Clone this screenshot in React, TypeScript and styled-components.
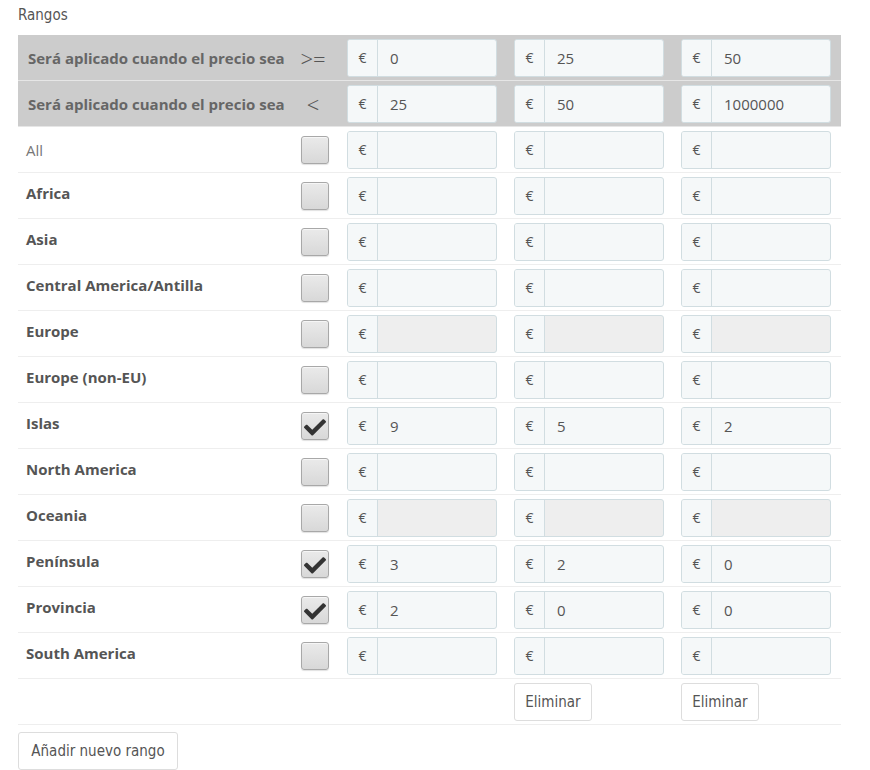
import React from "react";
import styled, { createGlobalStyle } from "styled-components";

const Global = createGlobalStyle`
  body {
    margin: 0;
    background: #fff;
    font-family: "Open Sans", "Liberation Sans", sans-serif;
    color: #555;
  }
`;

const Page = styled.div`
  padding: 4px 30px 0 18px;
  width: 822px;
`;

const Title = styled.div`
  font-family: "DejaVu Sans Condensed", "Open Sans", sans-serif;
  font-size: 15px;
  color: #555;
  height: 31px;
  line-height: 22px;
`;

const Grid = styled.div`
  display: grid;
  grid-template-columns: 272px 50px 167px 167px 167px;
  width: 823px;
`;

const Cell = styled.div<{ $head?: boolean }>`
  height: 45px;
  display: flex;
  align-items: center;
  background: ${(p) => (p.$head ? "#cccccc" : "#fff")};
  border-bottom: 1px solid ${(p) => (p.$head ? "#e6e6e6" : "#eeeeee")};
`;

const LabelCell = styled(Cell)<{ $bold?: boolean }>`
  padding-left: 8px;
  align-items: ${(p) => (p.$bold ? "flex-start" : "center")};
  padding-top: ${(p) => (p.$bold ? "10px" : "0")};
  height: ${(p) => (p.$bold ? "35px" : "45px")};
  font-size: 15px;
  font-weight: ${(p) => (p.$bold ? 700 : 400)};
  color: ${(p) => (p.$bold ? "#555" : "#777")};
  box-sizing: content-box;
`;

const HeadLabel = styled(Cell)`
  padding-left: 10px;
  font-size: 15px;
  font-weight: 700;
  color: #666;
  white-space: nowrap;
`;

const OpCell = styled(Cell)`
  justify-content: center;
  font-size: 22px;
  font-weight: 300;
  color: #555;
  padding-right: 4px;
`;

const CheckCell = styled(Cell)`
  justify-content: center;
`;

const InputCell = styled(Cell)`
  padding-left: 7px;
`;

const Box = styled.div`
  width: 26px;
  height: 26px;
  border: 1px solid #a8a8a8;
  border-radius: 3px;
  background: linear-gradient(#eaeaea, #d8d8d8);
  box-shadow: inset 0 1px 0 #f6f6f6, 0 1px 1px rgba(0, 0, 0, 0.12);
  display: flex;
  align-items: center;
  justify-content: center;
`;

const Group = styled.div<{ $disabled?: boolean }>`
  width: 150px;
  height: 38px;
  box-sizing: border-box;
  display: flex;
  border: 1px solid #d1dde1;
  border-radius: 3px;
  overflow: hidden;
  background: ${(p) => (p.$disabled ? "#eeeeee" : "#f5f8f9")};
`;

const Addon = styled.div`
  width: 29px;
  flex: none;
  display: flex;
  align-items: center;
  justify-content: center;
  background: #f5f8f9;
  border-right: 1px solid #d1dde1;
  font-size: 14px;
  color: #555;
`;

const Value = styled.div`
  flex: 1;
  display: flex;
  align-items: center;
  padding-left: 12px;
  font-size: 15px;
  color: #555;
`;

const Button = styled.button<{ $w: number }>`
  width: ${(p) => p.$w}px;
  height: 38px;
  background: #fff;
  border: 1px solid #dddddd;
  border-radius: 3px;
  font-family: "DejaVu Sans Condensed", "Open Sans", sans-serif;
  font-size: 15px;
  color: #555;
  padding: 0;
  cursor: pointer;
`;

const Footer = styled.div`
  padding-top: 7px;
`;

const Check = () => (
  <svg width="22" height="20" viewBox="0 0 512 448">
    <path
      fill="#333"
      d="M173.9 439.4 7.5 273c-10-10-10-26.2 0-36.2l36.2-36.2c10-10 26.2-10 36.2 0L192 312.7 432.1 72.6c10-10 26.2-10 36.2 0l36.2 36.2c10 10 10 26.2 0 36.2L210.1 439.4c-10 10-26.2 10-36.2 0z"
    />
  </svg>
);

type Row = { name: string; bold: boolean; checked?: boolean; disabled?: boolean; vals?: string[] };

const rows: Row[] = [
  { name: "All", bold: false },
  { name: "Africa", bold: true },
  { name: "Asia", bold: true },
  { name: "Central America/Antilla", bold: true },
  { name: "Europe", bold: true, disabled: true },
  { name: "Europe (non-EU)", bold: true },
  { name: "Islas", bold: true, checked: true, vals: ["9", "5", "2"] },
  { name: "North America", bold: true },
  { name: "Oceania", bold: true, disabled: true },
  { name: "Península", bold: true, checked: true, vals: ["3", "2", "0"] },
  { name: "Provincia", bold: true, checked: true, vals: ["2", "0", "0"] },
  { name: "South America", bold: true },
];

const heads = [
  { op: ">=", vals: ["0", "25", "50"] },
  { op: "<", vals: ["25", "50", "1000000"] },
];

function PriceInput({ value, disabled }: { value?: string; disabled?: boolean }) {
  return (
    <Group $disabled={disabled}>
      <Addon>€</Addon>
      <Value>{value}</Value>
    </Group>
  );
}

export default function App() {
  return (
    <>
      <Global />
      <Page>
        <Title>Rangos</Title>
        <Grid>
          {heads.map((h, i) => (
            <React.Fragment key={"h" + i}>
              <HeadLabel $head>Será aplicado cuando el precio sea</HeadLabel>
              <OpCell $head>{h.op}</OpCell>
              {h.vals.map((v, j) => (
                <InputCell $head key={j}>
                  <PriceInput value={v} />
                </InputCell>
              ))}
            </React.Fragment>
          ))}
          {rows.map((r) => (
            <React.Fragment key={r.name}>
              <LabelCell $bold={r.bold}>{r.name}</LabelCell>
              <CheckCell>
                <Box>{r.checked && <Check />}</Box>
              </CheckCell>
              {[0, 1, 2].map((j) => (
                <InputCell key={j}>
                  <PriceInput value={r.vals ? r.vals[j] : undefined} disabled={r.disabled} />
                </InputCell>
              ))}
            </React.Fragment>
          ))}
          <Cell />
          <Cell />
          <Cell />
          <InputCell>
            <Button $w={78}>Eliminar</Button>
          </InputCell>
          <InputCell>
            <Button $w={78}>Eliminar</Button>
          </InputCell>
        </Grid>
        <Footer>
          <Button $w={160}>Añadir nuevo rango</Button>
        </Footer>
      </Page>
    </>
  );
}
